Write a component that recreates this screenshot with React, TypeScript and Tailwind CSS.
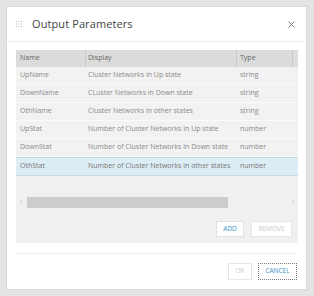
import React from 'react';

const rows = [
  { name: 'UpName', display: 'Cluster Networks in Up state', type: 'string' },
  { name: 'DownName', display: 'CLuster Networks in Down state', type: 'string' },
  { name: 'OthName', display: 'Cluster Networks in other states', type: 'string' },
  { name: 'UpStat', display: 'Number of Cluster Networks in Up state', type: 'number' },
  { name: 'DownStat', display: 'Number of Cluster Networks in Down state', type: 'number' },
  { name: 'OthStat', display: 'Number of Cluster Networks in other states', type: 'number' },
];

const DragDots = () => (
  <svg width="6" height="6" viewBox="0 0 6 6" className="mr-[10px]">
    {[0, 2.5, 5].map((y) =>
      [0, 2.5, 5].map((x) => <rect key={`${x}-${y}`} x={x} y={y} width="1" height="1" fill="#b5b5b5" />)
    )}
  </svg>
);

export default function App() {
  return (
    <div
      className="w-[314px] h-[296px] bg-[#e3e3e3] p-[6px] overflow-hidden"
      style={{ fontFamily: '"Open Sans", "DejaVu Sans", sans-serif' }}
    >
      <div className="w-[301px] h-[284px] bg-white border border-[#d9d9d9] flex flex-col">
        {/* Header */}
        <div className="h-[35px] flex items-center pl-[9px] pr-[11px] border-b border-[#eeeeee] shrink-0">
          <DragDots />
          <span className="text-[11px] text-[#444] tracking-[0.1px]">Output Parameters</span>
          <svg width="7" height="7" viewBox="0 0 7 7" className="ml-auto">
            <path d="M0.5 0.5 L6.5 6.5 M6.5 0.5 L0.5 6.5" stroke="#777" strokeWidth="0.9" />
          </svg>
        </div>

        {/* Body */}
        <div className="px-[9px] pt-[8px]">
          <div className="w-[282px] h-[193px] bg-[#f0f0f0] flex flex-col overflow-hidden">
            <div className="flex h-[17px] bg-[#dcdcdc] text-[7px] text-[#666] items-center shrink-0">
              <div className="w-[70px] pl-[4px] h-full flex items-center border-r border-[#c9c9c9]">Name</div>
              <div className="w-[151px] pl-[2px] h-full flex items-center border-r border-[#c9c9c9]">Display</div>
              <div className="w-[56px] pl-[3px] h-full flex items-center border-r border-[#c9c9c9]">Type</div>
              <div className="flex-1 h-full" />
            </div>
            {rows.map((r, i) => {
              const sel = i === rows.length - 1;
              return (
                <div
                  key={r.name}
                  className={
                    sel
                      ? 'flex h-[19px] items-center text-[7px] text-[#777] bg-[#dcedf5] border-y border-[#c3dceb] shrink-0'
                      : 'flex h-[18px] items-center text-[7px] text-[#8a8a8a] bg-[#f2f2f2] border-b border-[#fbfbfb] shrink-0'
                  }
                >
                  <div className="w-[70px] pl-[4px] whitespace-nowrap">{r.name}</div>
                  <div className="w-[151px] pl-[2px] whitespace-nowrap">{r.display}</div>
                  <div className="w-[56px] pl-[3px] whitespace-nowrap">{r.type}</div>
                </div>
              );
            })}

            {/* Horizontal scrollbar */}
            <div className="flex items-center h-[11px] mt-[21px] px-[4px] text-[7px] text-[#bbb]">
              <span className="w-[7px]">‹</span>
              <div className="w-[201px] h-[11px] bg-[#cccccc]" />
              <span className="ml-auto">›</span>
            </div>

            <div className="flex justify-end gap-[7px] mt-[13px] pr-[6px]">
              <button className="w-[28px] h-[16px] bg-white border border-[#e2e2e2] text-[6.5px] text-[#3b8fc4] leading-none">
                ADD
              </button>
              <button className="w-[41px] h-[16px] bg-white border border-[#e6e6e6] text-[6.5px] text-[#c8c8c8] leading-none">
                REMOVE
              </button>
            </div>
          </div>

          <div className="h-px bg-[#eeeeee] mt-[10px]" />

          <div className="flex justify-end gap-[6px] mt-[9px]">
            <button className="w-[24px] h-[17px] bg-white border border-[#e6e6e6] text-[6.5px] text-[#c8c8c8] leading-none">
              OK
            </button>
            <button className="w-[39px] h-[17px] bg-white border border-dotted border-[#777] text-[6.5px] text-[#3b8fc4] leading-none">
              CANCEL
            </button>
          </div>
        </div>
      </div>
    </div>
  );
}
